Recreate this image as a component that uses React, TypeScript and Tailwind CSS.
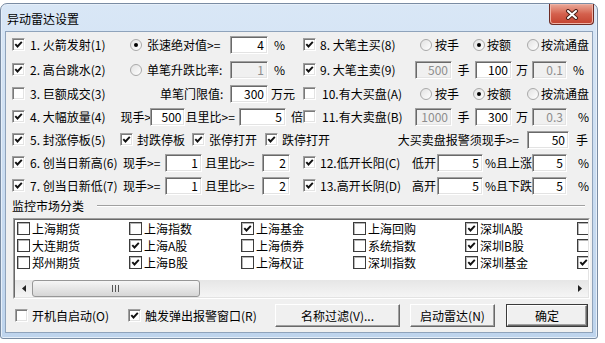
import React from "react";

function Check({ on, dark }: { on?: boolean; dark?: boolean }) {
  return (
    <span
      className={`flex h-[13px] w-[13px] shrink-0 items-center justify-center bg-white ${
        dark
          ? "border border-[#3c3c3c] shadow-[inset_1px_1px_0_#b5b5b5]"
          : "border border-[#a0a0a0] border-b-[#ffffff] border-r-[#ffffff] shadow-[inset_1px_1px_0_#7a7a7a,inset_-1px_-1px_0_#e3e3e3]"
      }`}
    >
      {on && (
        <svg width="9" height="9" viewBox="0 0 9 9">
          <path d="M1.3 4.1 L3.5 6.5 L7.8 1.9" fill="none" stroke="#111" strokeWidth="1.9" />
        </svg>
      )}
    </span>
  );
}

function Radio({ on }: { on?: boolean }) {
  return (
    <span className="flex h-[12px] w-[12px] shrink-0 items-center justify-center rounded-full border border-[#a9a9a9] bg-gradient-to-br from-[#e2e2e2] to-white">
      {on && <span className="h-[4px] w-[4px] rounded-full bg-black" />}
    </span>
  );
}

function Field({ v, w, off }: { v: string; w: string; off?: boolean }) {
  return (
    <span
      className={`${w} flex h-[18px] shrink-0 items-center justify-end border border-[#a0a0a0] border-b-[#ffffff] border-r-[#ffffff] pr-[3px] shadow-[inset_1px_1px_0_#696969,inset_-1px_-1px_0_#e3e3e3] ${
        off ? "bg-[#f0f0f0] text-[#8d8d8d]" : "bg-white text-black"
      }`}
    >
      {v}
    </span>
  );
}

function Button({ label, w, main }: { label: string; w: string; main?: boolean }) {
  return (
    <span className={`${w} flex h-[23px] shrink-0 ${main ? "border border-[#3a3a3a]" : ""}`}>
      <span className="flex flex-1 items-center justify-center border border-white border-b-[#696969] border-r-[#696969] bg-[#f0f0f0] shadow-[inset_-1px_-1px_0_#a0a0a0]">
        {label}
      </span>
    </span>
  );
}

const markets: [string, boolean][] = [
  ["上海期货", false],
  ["大连期货", false],
  ["郑州期货", false],
  ["上海指数", false],
  ["上海A股", true],
  ["上海B股", true],
  ["上海基金", true],
  ["上海债券", false],
  ["上海权证", false],
  ["上海回购", false],
  ["系统指数", false],
  ["深圳指数", false],
  ["深圳A股", true],
  ["深圳B股", true],
  ["深圳基金", true],
  ["", false],
  ["", false],
  ["", true],
];

export default function App() {
  return (
    <div className="h-[343px] w-[605px] overflow-hidden whitespace-nowrap bg-white font-['Noto_Sans_CJK_SC',sans-serif] text-[12px] text-black">
      <div className="mt-[3px] flex h-[336px] w-[598px] flex-col rounded-t-[7px] rounded-b-[3px] border border-[#7a8ca3] bg-gradient-to-b from-[#d9e7f6] to-[#bed4ed] shadow-[inset_0_0_0_1px_#e6eff9]">
        {/* title bar */}
        <div className="flex h-[27px] items-start justify-between pl-[6px]">
          <span className="mt-[5px] leading-[20px]">异动雷达设置</span>
          <span className="mr-[3px] flex h-[21px] w-[45px] items-center justify-center rounded-b-[4px] border border-t-0 border-[#6d2c24] bg-gradient-to-b from-[#e9a999] via-[#d4604d] to-[#c3422f] shadow-[inset_0_0_0_1px_#eeb3a6]">
            <svg width="14" height="11" viewBox="0 0 14 11">
              <path d="M3 2 L11 9 M11 2 L3 9" stroke="#4a2019" strokeWidth="4" strokeLinecap="round" />
              <path d="M3 2 L11 9 M11 2 L3 9" stroke="#ffffff" strokeWidth="2" strokeLinecap="round" />
            </svg>
          </span>
        </div>

        {/* client */}
        <div className="mx-[4px] flex h-[302px] flex-col border border-[#8fa3bb] bg-[#f0f0f0]">
          {/* row 1 */}
          <div className="flex h-[25px] items-center pl-[6px]">
            <div className="flex w-[291px] shrink-0 items-center">
              <Check on />
              <span className="ml-[5px] w-[100px]">1. 火箭发射(1)</span>
              <Radio on />
              <span className="ml-[5px] w-[83px]">张速绝对值&gt;=</span>
              <Field v="4" w="w-[38px]" />
              <span className="ml-[6px]">%</span>
            </div>
            <div className="flex items-center">
              <Check on />
              <span className="ml-[4px] w-[100px]">8. 大笔主买(8)</span>
              <Radio />
              <span className="ml-[3px] w-[38px]">按手</span>
              <Radio on />
              <span className="ml-[2px] w-[40px]">按额</span>
              <Radio />
              <span className="ml-[2px]">按流通盘</span>
            </div>
          </div>

          {/* row 2 */}
          <div className="flex h-[25px] items-center pl-[6px]">
            <div className="flex w-[291px] shrink-0 items-center">
              <Check on />
              <span className="ml-[5px] w-[100px]">2. 高台跳水(2)</span>
              <Radio />
              <span className="ml-[5px] w-[83px]">单笔升跌比率:</span>
              <Field v="1" w="w-[38px]" off />
              <span className="ml-[6px]">%</span>
            </div>
            <div className="flex items-center">
              <Check on />
              <span className="ml-[4px] w-[95px]">9. 大笔主卖(9)</span>
              <Field v="500" w="w-[37px]" off />
              <span className="w-[23px] text-center">手</span>
              <Field v="100" w="w-[37px]" />
              <span className="w-[20px] text-center">万</span>
              <Field v="0.1" w="w-[35px]" off />
              <span className="ml-[6px]">%</span>
            </div>
          </div>

          {/* row 3 */}
          <div className="flex h-[23px] items-center pl-[6px]">
            <div className="flex w-[291px] shrink-0 items-center">
              <Check />
              <span className="ml-[5px] w-[130px]">3. 巨额成交(3)</span>
              <span className="w-[70px]">单笔门限值:</span>
              <Field v="300" w="w-[38px]" />
              <span className="ml-[3px]">万元</span>
            </div>
            <div className="flex items-center">
              <Check />
              <span className="ml-[6px] w-[98px]">10.有大买盘(A)</span>
              <Radio />
              <span className="ml-[3px] w-[38px]">按手</span>
              <Radio on />
              <span className="ml-[2px] w-[40px]">按额</span>
              <Radio />
              <span className="ml-[2px]">按流通盘</span>
            </div>
          </div>

          {/* row 4 */}
          <div className="flex h-[23px] items-center pl-[6px]">
            <div className="flex w-[291px] shrink-0 items-center">
              <Check on />
              <span className="ml-[5px] w-[93px]">4. 大幅放量(4)</span>
              <span className="w-[30px]">现手&gt;=</span>
              <Field v="500" w="w-[35px]" />
              <span className="w-[55px]">且里比&gt;=</span>
              <Field v="5" w="w-[47px]" />
              <span className="ml-[5px]">倍</span>
            </div>
            <div className="flex items-center">
              <Check />
              <span className="ml-[6px] w-[93px]">11.有大卖盘(B)</span>
              <Field v="1000" w="w-[37px]" off />
              <span className="w-[23px] text-center">手</span>
              <Field v="300" w="w-[37px]" />
              <span className="w-[20px] text-center">万</span>
              <Field v="0.3" w="w-[35px]" off />
              <span className="ml-[11px]">%</span>
            </div>
          </div>

          {/* row 5 */}
          <div className="flex h-[23px] items-center pl-[6px]">
            <Check on />
            <span className="ml-[5px] w-[90px]">5. 封涨停板(5)</span>
            <Check on />
            <span className="ml-[4px] w-[55px]">封跌停板</span>
            <Check on />
            <span className="ml-[4px] w-[56px]">张停打开</span>
            <Check on />
            <span className="ml-[4px]">跌停打开</span>
            <div className="ml-auto flex items-center pr-[4px]">
              <span className="mr-[8px]">大买卖盘报警须现手&gt;=</span>
              <Field v="50" w="w-[42px]" />
              <span className="ml-[7px]">手</span>
            </div>
          </div>

          {/* row 6 */}
          <div className="flex h-[23px] items-center pl-[6px]">
            <div className="flex w-[291px] shrink-0 items-center">
              <Check on />
              <span className="ml-[5px] w-[93px]">6. 创当日新高(6)</span>
              <span className="w-[42px]">现手&gt;=</span>
              <Field v="1" w="w-[37px]" />
              <span className="w-[60px] pl-[3px]">且里比&gt;=</span>
              <Field v="2" w="w-[28px]" />
            </div>
            <div className="flex items-center">
              <Check on />
              <span className="ml-[4px] w-[92px]">12.低开长阳(C)</span>
              <span className="w-[25px]">低开</span>
              <Field v="5" w="w-[46px]" />
              <span className="w-[49px] pl-[2px]">%且上涨</span>
              <Field v="5" w="w-[35px]" />
              <span className="ml-[11px]">%</span>
            </div>
          </div>

          {/* row 7 */}
          <div className="flex h-[23px] items-center pl-[6px]">
            <div className="flex w-[291px] shrink-0 items-center">
              <Check on />
              <span className="ml-[5px] w-[93px]">7. 创当日新低(7)</span>
              <span className="w-[42px]">现手&gt;=</span>
              <Field v="1" w="w-[37px]" />
              <span className="w-[60px] pl-[3px]">且里比&gt;=</span>
              <Field v="2" w="w-[28px]" />
            </div>
            <div className="flex items-center">
              <Check on />
              <span className="ml-[4px] w-[92px]">13.高开长阴(D)</span>
              <span className="w-[25px]">高开</span>
              <Field v="5" w="w-[46px]" />
              <span className="w-[49px] pl-[2px]">%且下跌</span>
              <Field v="5" w="w-[35px]" />
              <span className="ml-[11px]">%</span>
            </div>
          </div>

          {/* market group label */}
          <div className="flex h-[18px] items-center pl-[6px]">
            <span>监控市场分类</span>
            <span className="ml-[13px] mr-[7px] h-[2px] flex-1 border-t border-b border-t-[#a0a0a0] border-b-white" />
          </div>

          {/* market list */}
          <div className="ml-[7px] mr-[2px] mt-[3px] flex h-[81px] flex-col border border-[#a0a0a0] border-b-white border-r-white">
            <div className="flex flex-1 flex-col overflow-hidden border border-[#696969] border-b-[#e3e3e3] border-r-[#e3e3e3] bg-white">
              <div className="grid auto-cols-[112px] grid-flow-col grid-rows-[17px_17px_17px] pl-[2px]">
                {markets.map(([name, on], i) => (
                  <div key={i} className="flex items-center gap-[2px]">
                    <Check on={on} dark />
                    <span>{name}</span>
                  </div>
                ))}
              </div>
              <div className="flex-1" />
              <div className="flex h-[17px] bg-gradient-to-b from-[#e6e6e6] to-[#f5f5f5]">
                <span className="flex w-[17px] items-center justify-center">
                  <svg width="4" height="7" viewBox="0 0 4 7">
                    <path d="M4 0 L0 3.5 L4 7 Z" fill="#222" />
                  </svg>
                </span>
                <span className="flex w-[168px] items-center justify-center rounded-[3px] border border-[#979797] bg-gradient-to-b from-[#f6f6f6] to-[#d6d6d6]">
                  <svg width="8" height="7" viewBox="0 0 8 7">
                    <path d="M0.5 0 V7 M3.5 0 V7 M6.5 0 V7" stroke="#555" strokeWidth="1" />
                  </svg>
                </span>
                <span className="flex-1" />
                <span className="flex w-[17px] items-center justify-center">
                  <svg width="4" height="7" viewBox="0 0 4 7">
                    <path d="M0 0 L4 3.5 L0 7 Z" fill="#222" />
                  </svg>
                </span>
              </div>
            </div>
          </div>

          {/* bottom row */}
          <div className="flex flex-1 items-center pl-[9px]">
            <Check />
            <span className="ml-[4px] w-[96px]">开机自启动(O)</span>
            <Check on />
            <span className="ml-[4px] w-[130px]">触发弹出报警窗口(R)</span>
            <Button label="名称过滤(V)..." w="w-[125px]" />
            <span className="w-[10px]" />
            <Button label="启动雷达(N)" w="w-[85px]" />
            <span className="w-[11px]" />
            <Button label="确定" w="w-[82px]" main />
          </div>
        </div>
      </div>
    </div>
  );
}
